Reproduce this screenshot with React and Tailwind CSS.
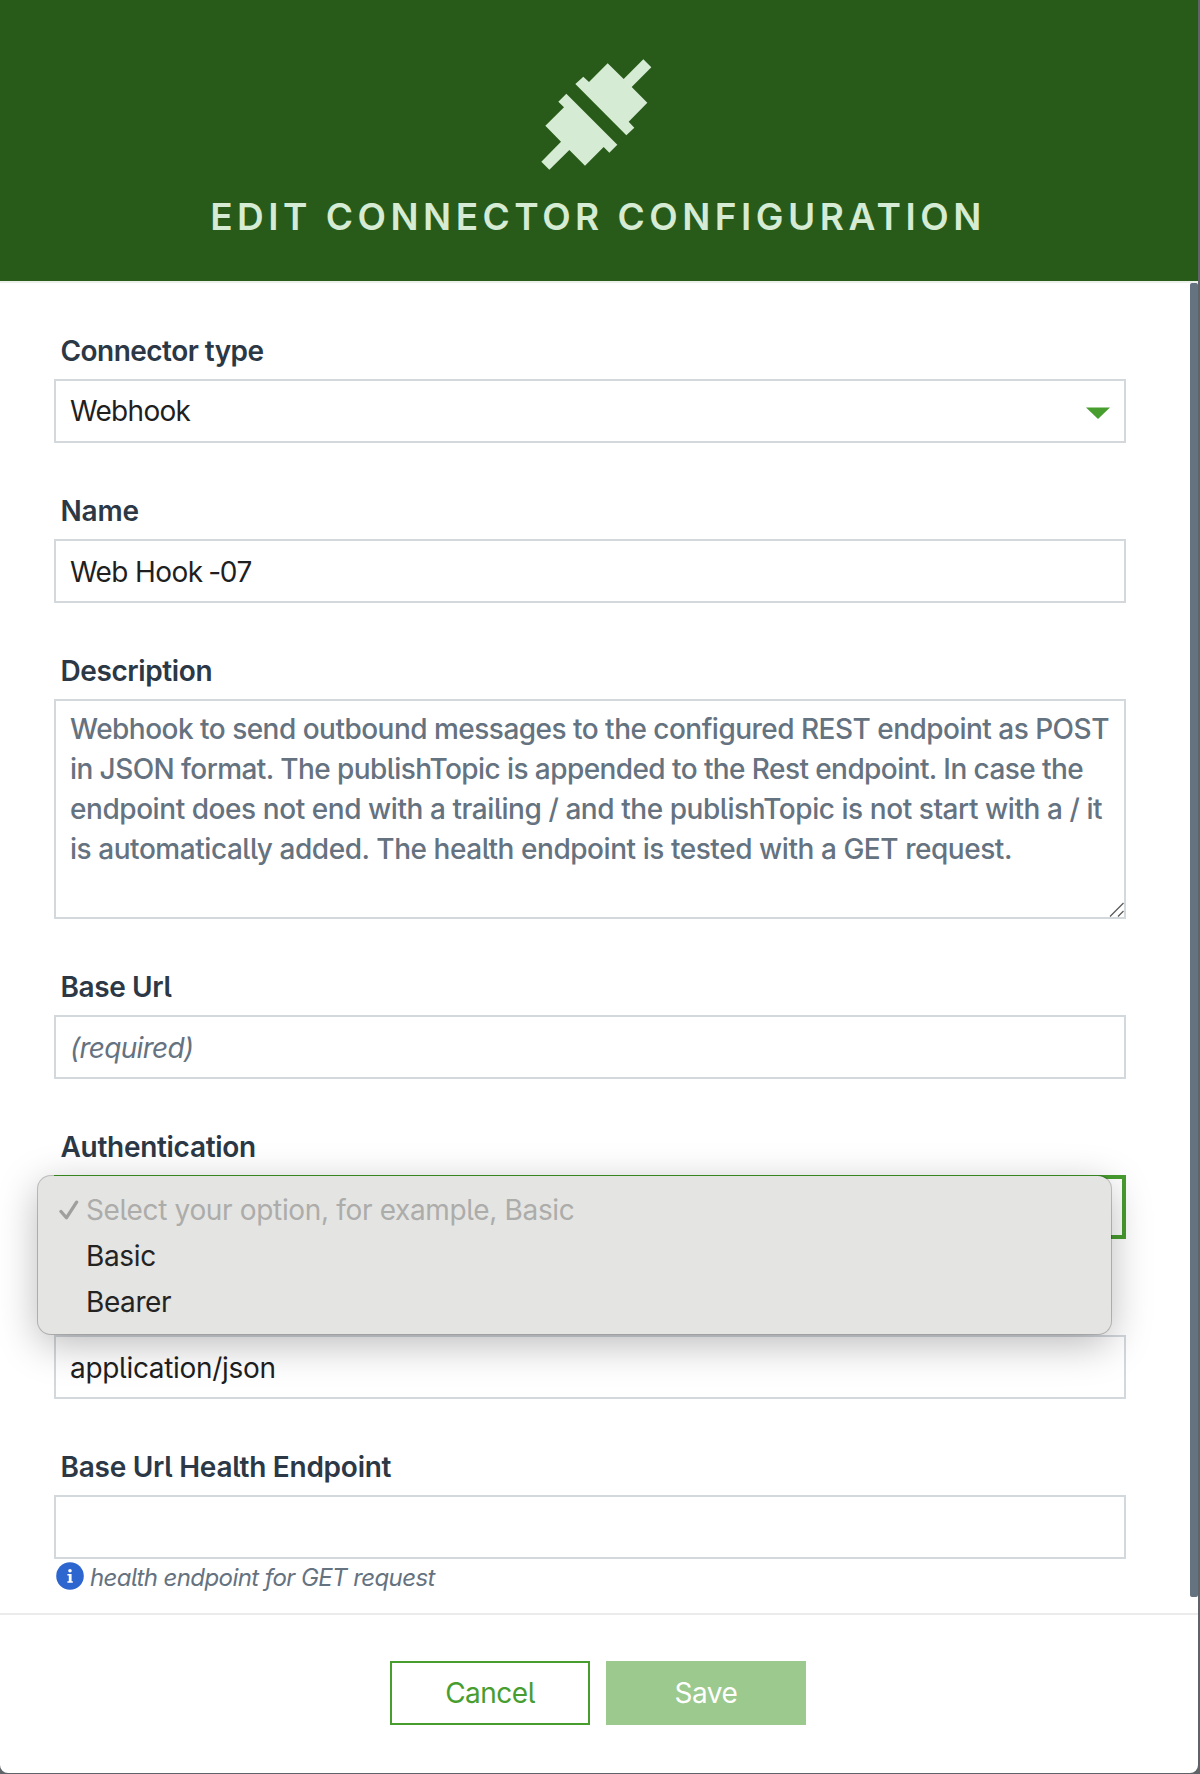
function PlugIcon() {
  return (
    <svg viewBox="0 0 480 450" className="ml-[2px] h-[150px] w-[160px]" fill="#d5ebd3">
      <path d="M166 132 190 110 207 126 263 70 311 117 370 58 394 82 335 141 382 188 326 245 343 263 319 286Z" />
      <path d="M139 161 292 314 268 338 251 321 195 377 148 330 88 389 64 365 123 305 76 257 132 202 115 185Z" />
    </svg>
  );
}

function Label({ className = "", children }) {
  return (
    <label
      className={`mb-2 block h-10 whitespace-pre pl-[6.5px] text-[28px] leading-10 font-semibold text-[#2c3845] ${className}`}
    >
      {children}
    </label>
  );
}

function Box({ className = "", children }) {
  return (
    <div
      className={`flex h-16 items-center border-2 border-[#d3d8dd] bg-white pl-[14px] text-[28px] whitespace-pre ${className}`}
    >
      {children}
    </div>
  );
}

export default function App() {
  return (
    <div
      className="h-[1774px] w-[1200px] overflow-hidden bg-[#5f6469] pr-[2px] pb-px font-['Inter',sans-serif] font-[420] text-[#1f1f1f]"
      style={{ fontFeatureSettings: '"cv05"' }}
    >
      <div className="flex h-full flex-col overflow-hidden rounded-b-lg bg-white">
        <header className="flex h-[283px] shrink-0 flex-col items-center border-b-2 border-[#ebefe9] bg-[#285b19] pt-10">
          <PlugIcon />
          <h1 className="mt-[3px] h-12 pr-[2px] text-[37px] leading-12 font-semibold tracking-[4.5px] whitespace-nowrap text-[#d5ebd3]">
            EDIT CONNECTOR CONFIGURATION
          </h1>
        </header>

        <main className="flex h-[1330px] shrink-0">
          <form className="flex w-[1126px] shrink-0 flex-col gap-12 pt-12 pl-[54px]">
            <div>
              <Label className="tracking-[-0.54px]">Connector type</Label>
              <Box className="justify-between pr-[14px] tracking-[-0.7px]">
                Webhook
                <svg viewBox="0 0 24 12" className="mt-[3px] h-3 w-6" fill="#489d2f">
                  <path d="M0 0.4h24L12 12Z" />
                </svg>
              </Box>
            </div>

            <div>
              <Label className="tracking-[-0.2px]">Name</Label>
              <Box className="pt-[2px] tracking-[-0.6px]">
                Web Hook<span className="-ml-px tracking-[-1.2px]"> -</span>
                <span className="tracking-[-0.5px]">07</span>
              </Box>
            </div>

            <div>
              <Label className="tracking-[-0.4px]">Description</Label>
              <div className="relative h-[220px] border-2 border-[#d3d8dd] pt-2 pl-[14px] text-[28px] leading-10 font-[450] whitespace-nowrap text-[#657280]">
                <p className="tracking-[-0.52px]">
                  Webhook to send outbound messages to the configured REST endpoint as POST
                </p>
                <p className="tracking-[-0.58px]">
                  in JSON format. The publishTopic is appended to the Rest endpoint. In case the
                </p>
                <p className="tracking-[-0.44px]">
                  endpoint does not end with a trailing / and the publishTopic is not start with a / it
                </p>
                <p className="tracking-[-0.45px]">
                  is automatically added. The health endpoint is tested with a GET request.
                </p>
                <svg
                  viewBox="0 0 15 15"
                  className="absolute right-0 bottom-0 size-[15px]"
                  stroke="#5c5c5c"
                  strokeWidth="1.3"
                >
                  <path d="M1 14.5 14.5 1M9 14.5 14.5 9" />
                </svg>
              </div>
            </div>

            <div>
              <Label className="tracking-[-0.4px]">Base Url</Label>
              <Box className="pt-[2px] tracking-[-0.72px] italic">
                <span className="text-[#657280]">(required)</span>
              </Box>
            </div>

            <div className="relative">
              <Label className="tracking-[-0.3px]">Authentication</Label>
              <div className="h-16 border-4 border-[#489d2f] bg-white" />
              <div className="absolute top-[49px] -left-[16.5px] z-10 h-[158px] w-[1073px] rounded-[13px] bg-[#e4e4e2] pt-[11px] text-[28px] leading-[46px] font-normal text-[#232323] shadow-[0_0_0_1px_rgba(0,0,0,0.22),0_10px_40px_rgba(0,0,0,0.28)]">
                <div className="flex items-center text-[#acacaa]">
                  <svg
                    viewBox="0 0 20 20"
                    className="ml-[21.5px] size-5"
                    fill="none"
                    stroke="#9f9f9d"
                    strokeWidth="3.3"
                    strokeLinecap="round"
                    strokeLinejoin="round"
                  >
                    <path d="M2 11.5 7.4 17.8 17.6 2.2" />
                  </svg>
                  <span className="ml-[7px] tracking-[-0.34px] whitespace-nowrap">
                    Select your option, for example, Basic
                  </span>
                </div>
                <div className="pl-[48.5px] tracking-[-0.35px]">Basic</div>
                <div className="pl-[48.5px] tracking-[-0.4px]">Bearer</div>
              </div>
              <div className="absolute top-12 left-0 z-20 h-px w-[1045px] bg-[#37851f]" />
            </div>

            <div>
              <Label> </Label>
              <Box className="pt-[2px] tracking-[-0.32px]">application/json</Box>
            </div>

            <div>
              <Label className="tracking-[-0.26px]">Base Url Health Endpoint</Label>
              <Box />
              <div className="flex h-9 items-center pl-[2px]">
                <svg viewBox="0 0 28 28" className="-mt-[3px] size-7 shrink-0">
                  <circle cx="14" cy="14" r="13.8" fill="#2e66d0" />
                  <path
                    d="M12.2 8.8a1.8 1.8 0 1 1 3.6 0 1.8 1.8 0 0 1-3.6 0ZM11.4 12h4.2v7.3h1.2v1.5h-5.4v-1.5h1.4v-5.8h-1.4Z"
                    fill="#fff"
                  />
                </svg>
                <span className="mt-[2px] ml-[6px] text-[24px] leading-9 tracking-[-0.58px] whitespace-nowrap text-[#657280] italic">
                  health endpoint for GET request
                </span>
              </div>
            </div>
          </form>
          <div className="ml-auto h-[1314px] w-2 rounded-[2px] bg-[#657280]" />
        </main>

        <footer className="flex h-40 shrink-0 justify-center gap-4 border-t-2 border-[#ebebeb] pt-[46px] pr-[2px] text-[28px]">
          <button className="h-16 w-[200px] border-2 border-[#489d2f] tracking-[-0.5px] text-[#489d2f]">
            Cancel
          </button>
          <button className="h-16 w-[200px] bg-[#9bc98e] tracking-[-0.5px] text-white">Save</button>
        </footer>
      </div>
    </div>
  );
}
